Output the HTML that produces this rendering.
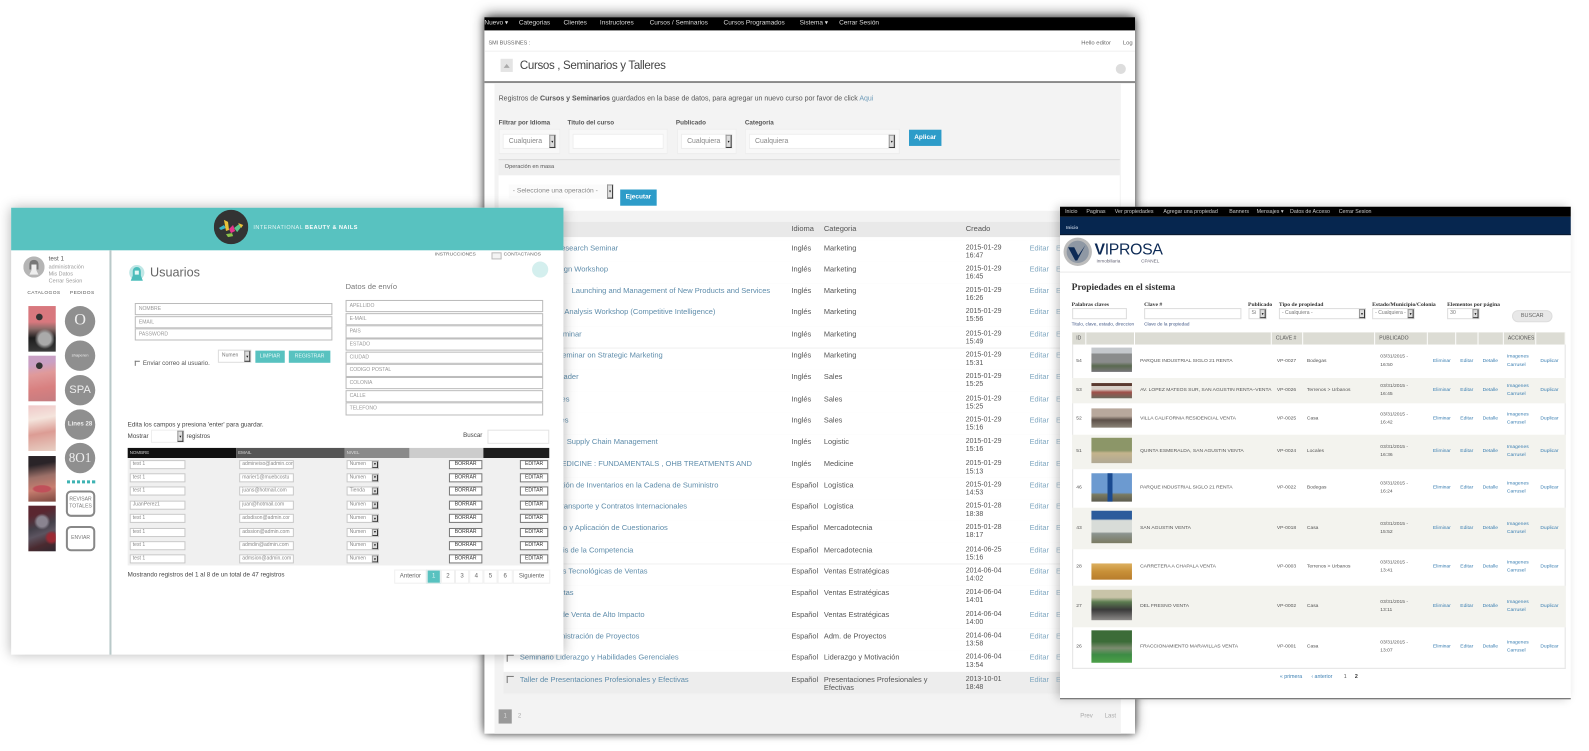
<!DOCTYPE html>
<html lang="es"><head><meta charset="utf-8"><title>Portafolio</title>
<style>
html,body{margin:0;padding:0;width:1589px;height:751px;overflow:hidden;background:#fff}
#root{position:absolute;left:0;top:0;width:1568px;height:741px;transform:scale(1.01339);transform-origin:0 0;filter:blur(.35px);font-family:"Liberation Sans",sans-serif;color:#555}
.a,.a *,.lr *,.rh{box-sizing:border-box}
.a{position:absolute;white-space:nowrap;line-height:8px}
.g{position:absolute;left:0;top:0;width:1568px;height:741px}
.b{font-weight:bold}
/* select arrow */
.ar{position:absolute;right:0;top:0;bottom:0;width:6px;background:#ddd;border:1px solid #999;border-right-color:#333;border-bottom-color:#333}
.ar:after{content:"";position:absolute;left:1px;top:50%;margin-top:-1px;border:1.5px solid transparent;border-top:2.5px solid #111}
/* center */
.n{color:#ddd;font-size:6.4px;top:19px}
.fl{font-size:6.2px;font-weight:bold;color:#555;top:118px}
.fb{background:#f8f8f8;border:1px solid #eee;top:127px;height:25px}
.fi{position:absolute;left:3px;top:4px;bottom:4px;right:3px;background:#fff;border:1px solid #eee;font-size:6.8px;line-height:14px;padding-left:5px;color:#888}
.r{position:absolute;left:497px;width:608px;height:21.3px;background:#fff;border-bottom:1px solid #f0f0f0;color:#555;font-size:7.3px}
.r span{position:absolute;white-space:nowrap;top:3.5px;line-height:8px}
.t{color:#5f8dab;font-size:7.45px}.i{left:284px}.k{left:316px}.d{left:456px;font-size:6.9px}.e{left:519px;color:#7fa7c0}.x{left:545px;color:#a8c2d2}
.cb{position:absolute;left:3px;top:4px;width:6px;height:6px;border-top:1.5px solid #777;border-left:1.5px solid #777}
/* left */
.li{background:#fff;border:1px solid #bbb;border-width:1.5px 1px 1.5px 1px;height:12.4px;font-size:5px;line-height:10px;padding-left:3px;color:#999}
.lc{width:30px;height:30px;border-radius:50%;background:#8f8f8f;color:#eee;text-align:center;line-height:30px;left:64px}
.lr{position:absolute;left:0;width:1568px;height:9px}
.lr i{position:absolute;top:0;height:9px;background:#fff;border:1px solid #c8c8c8;font:normal 5px/7px "Liberation Sans",sans-serif;color:#888;padding-left:2px;white-space:nowrap;overflow:hidden}
.lr b{position:absolute;top:0;height:9px;background:#fff;border:1px solid #777;font:normal 5px/7px "Liberation Sans",sans-serif;color:#333;text-align:center}
.pg{top:562px;height:14px;background:#fff;border:1px solid #f0f0f0;font-size:6px;line-height:13px;text-align:center;color:#666}
.th{left:28px;width:27px;height:45px}
/* right */
.rn{color:#ccc;font-size:5.25px;top:205px}
.rl{font:bold 5.6px/8px "Liberation Serif",serif;color:#333;top:296.5px}
.ri{top:304px;height:11px;background:#fff;border:1px solid #ddd;font-size:5px;line-height:9px;padding-left:2px;color:#777}
.rh{position:absolute;top:327.6px;height:12px;border-right:1px solid #fff;font-size:5px;line-height:12px;color:#555;background:#dcdcd4;padding-left:4px}
.p{position:absolute;left:1058px;width:486.5px;font-size:4.9px;color:#555}
.p span{position:absolute;white-space:nowrap;top:50%;margin-top:-4px;line-height:8px}
.p em{position:absolute;font-style:normal;left:19px;width:40px}
.L{color:#3b7fb2}
.p .T{margin-top:-8px}
</style></head><body>
<div id="root">

<!-- CENTER PANEL -->
<div class="g" style="z-index:1">
<div class="a" style="left:478px;top:17px;width:642px;height:707px;background:#fff;box-shadow:0 -3px 12px rgba(0,0,0,.55),0 1px 7px rgba(0,0,0,.6)"></div>
<div class="a" style="left:478px;top:17px;width:642px;height:13px;background:#000"></div>
<div class="a n" style="left:478px">Nuevo ▾</div><div class="a n" style="left:512px">Categorias</div><div class="a n" style="left:556px">Clientes</div><div class="a n" style="left:592px">Instructores</div><div class="a n" style="left:641px">Cursos / Seminarios</div><div class="a n" style="left:714px">Cursos Programados</div><div class="a n" style="left:789px">Sistema ▾</div><div class="a n" style="left:828px">Cerrar Sesión</div>
<div class="a" style="left:482px;top:39px;font-size:5.4px;color:#666">SMI BUSSINES :</div>
<div class="a" style="left:1067px;top:39px;font-size:5.8px;color:#666">Hello editor</div>
<div class="a" style="left:1108px;top:39px;font-size:5.8px;color:#666">Log</div>
<div class="a" style="left:478px;top:50px;width:642px;height:1px;background:#f0f0f0"></div>
<div class="a" style="left:494px;top:58px;width:12px;height:13px;background:#e4e4e4"></div>
<div class="a" style="left:497px;top:61px;border:3px solid transparent;border-bottom:4px solid #aaa;margin-top:-1px"></div>
<div class="a" style="left:513px;top:57px;font-size:11.4px;line-height:16px;letter-spacing:-.33px;color:#444">Cursos , Seminarios y Talleres</div>
<div class="a" style="left:1101px;top:63px;width:10px;height:10px;border-radius:50%;background:#ddd"></div>
<div class="a" style="left:478px;top:80px;width:642px;height:1.5px;background:#8a8a8a"></div>
<div class="a" style="left:488px;top:81.5px;width:618px;height:642.5px;background:#f3f3f3"></div>
<div class="a" style="left:492px;top:94px;font-size:6.95px;color:#555">Registros de <b>Cursos y Seminarios</b> guardados en la base de datos, para agregar un nuevo curso por favor de click <span style="color:#6f9cba">Aqui</span></div>

<div class="a fl" style="left:492px">Filtrar por Idioma</div><div class="a fl" style="left:560px">Titulo del curso</div><div class="a fl" style="left:667px">Publicado</div><div class="a fl" style="left:735px">Categoria</div>
<div class="a fb" style="left:492px;width:61px"><div class="fi">Cualquiera<div class="ar"></div></div></div>
<div class="a fb" style="left:561px;width:98px"><div class="fi"></div></div>
<div class="a fb" style="left:668px;width:59px"><div class="fi">Cualquiera<div class="ar"></div></div></div>
<div class="a fb" style="left:735px;width:153px"><div class="fi">Cualquiera<div class="ar"></div></div></div>
<div class="a b" style="left:897px;top:128px;width:32px;height:16px;background:#2d9cc9;color:#fff;font-size:6.4px;line-height:15px;text-align:center">Aplicar</div>

<div class="a" style="left:492px;top:157px;width:613px;height:16px;background:#efefef;border-top:1px solid #ddd;font-size:5.6px;line-height:15px;padding-left:6px;color:#555">Operación en masa</div>
<div class="a" style="left:492px;top:173px;width:613px;height:35px;background:#fff"></div>
<div class="a" style="left:502px;top:182px;width:103px;height:14px;background:#fbfbfb;font-size:6.6px;line-height:14px;padding-left:4px;color:#888">- Seleccione una operación -<div class="ar"></div></div>
<div class="a b" style="left:612px;top:187px;width:36px;height:16px;background:#2d9cc9;color:#fff;font-size:6.4px;line-height:16px;text-align:center">Ejecutar</div>

<div class="a" style="left:497px;top:219px;width:608px;height:15px;background:#e9e9e9"></div>
<div class="a" style="left:781px;top:222px;font-size:7.4px">Idioma</div><div class="a" style="left:813px;top:222px;font-size:7.4px">Categoria</div><div class="a" style="left:953px;top:222px;font-size:7.4px">Creado</div>
<div class="a" style="left:497px;top:234px;width:608px;height:3px;background:#fff"></div>

<div class="r" style="top:237px"><span class="t" style="right:495px">Research Seminar</span><span class="i">Inglés</span><span class="k">Marketing</span><span class="d">2015-01-29<br>16:47</span><span class="e">Editar</span><span class="x">Eliminar</span></div>
<div class="r" style="top:258.3px"><span class="t" style="right:505px">Design Workshop</span><span class="i">Inglés</span><span class="k">Marketing</span><span class="d">2015-01-29<br>16:45</span><span class="e">Editar</span><span class="x">Eliminar</span></div>
<div class="r" style="top:279.6px"><span class="t" style="right:345px">Launching and Management of New Products and Services</span><span class="i">Inglés</span><span class="k">Marketing</span><span class="d">2015-01-29<br>16:26</span><span class="e">Editar</span><span class="x">Eliminar</span></div>
<div class="r" style="top:300.9px"><span class="t" style="right:399px">Analysis Workshop (Competitive Intelligence)</span><span class="i">Inglés</span><span class="k">Marketing</span><span class="d">2015-01-29<br>15:56</span><span class="e">Editar</span><span class="x">Eliminar</span></div>
<div class="r" style="top:322.2px"><span class="t" style="right:531px">Seminar</span><span class="i">Inglés</span><span class="k">Marketing</span><span class="d">2015-01-29<br>15:49</span><span class="e">Editar</span><span class="x">Eliminar</span></div>
<div class="r" style="top:343.5px"><span class="t" style="right:451px">Seminar on Strategic Marketing</span><span class="i">Inglés</span><span class="k">Marketing</span><span class="d">2015-01-29<br>15:31</span><span class="e">Editar</span><span class="x">Eliminar</span></div>
<div class="r" style="top:364.8px"><span class="t" style="right:534px">Leader</span><span class="i">Inglés</span><span class="k">Sales</span><span class="d">2015-01-29<br>15:25</span><span class="e">Editar</span><span class="x">Eliminar</span></div>
<div class="r" style="top:386.1px"><span class="t" style="right:543px">Sales</span><span class="i">Inglés</span><span class="k">Sales</span><span class="d">2015-01-29<br>15:25</span><span class="e">Editar</span><span class="x">Eliminar</span></div>
<div class="r" style="top:407.4px"><span class="t" style="right:544px">Sales</span><span class="i">Inglés</span><span class="k">Sales</span><span class="d">2015-01-29<br>15:16</span><span class="e">Editar</span><span class="x">Eliminar</span></div>
<div class="r" style="top:428.7px"><span class="t" style="right:456px">Supply Chain Management</span><span class="i">Inglés</span><span class="k">Logistic</span><span class="d">2015-01-29<br>15:16</span><span class="e">Editar</span><span class="x">Eliminar</span></div>
<div class="r" style="top:450px"><span class="t" style="right:363px">MEDICINE : FUNDAMENTALS , OHB TREATMENTS AND</span><span class="i">Inglés</span><span class="k">Medicine</span><span class="d">2015-01-29<br>15:13</span><span class="e">Editar</span><span class="x">Eliminar</span></div>
<div class="r" style="top:471.3px"><span class="t" style="right:396px">Gestión de Inventarios en la Cadena de Suministro</span><span class="i">Español</span><span class="k">Logística</span><span class="d">2015-01-29<br>14:53</span><span class="e">Editar</span><span class="x">Eliminar</span></div>
<div class="r" style="top:492.6px"><span class="t" style="right:427px">Transporte y Contratos Internacionales</span><span class="i">Español</span><span class="k">Logística</span><span class="d">2015-01-28<br>18:38</span><span class="e">Editar</span><span class="x">Eliminar</span></div>
<div class="r" style="top:513.9px"><span class="t" style="right:446px">Diseño y Aplicación de Cuestionarios</span><span class="i">Español</span><span class="k">Mercadotecnia</span><span class="d">2015-01-28<br>18:17</span><span class="e">Editar</span><span class="x">Eliminar</span></div>
<div class="r" style="top:535.2px"><span class="t" style="right:480px">Análisis de la Competencia</span><span class="i">Español</span><span class="k">Mercadotecnia</span><span class="d">2014-06-25<br>15:16</span><span class="e">Editar</span><span class="x">Eliminar</span></div>
<div class="r" style="top:556.5px"><span class="t" style="right:466px">Herramientas Tecnológicas de Ventas</span><span class="i">Español</span><span class="k">Ventas Estratégicas</span><span class="d">2014-06-04<br>14:02</span><span class="e">Editar</span><span class="x">Eliminar</span></div>
<div class="r" style="top:577.8px"><span class="t" style="right:539px">Ventas</span><span class="i">Español</span><span class="k">Ventas Estratégicas</span><span class="d">2014-06-04<br>14:01</span><span class="e">Editar</span><span class="x">Eliminar</span></div>
<div class="r" style="top:599.1px"><span class="t" style="right:469px">Técnicas de Venta de Alto Impacto</span><span class="i">Español</span><span class="k">Ventas Estratégicas</span><span class="d">2014-06-04<br>14:00</span><span class="e">Editar</span><span class="x">Eliminar</span></div>
<div class="r" style="top:620.4px"><span class="t" style="right:474px">Administración de Proyectos</span><span class="i">Español</span><span class="k">Adm. de Proyectos</span><span class="d">2014-06-04<br>13:58</span><span class="e">Editar</span><span class="x">Eliminar</span></div>
<div class="r" style="top:641.7px"><div class="cb"></div><span class="t" style="left:16px">Seminario Liderazgo y Habilidades Gerenciales</span><span class="i">Español</span><span class="k">Liderazgo y Motivación</span><span class="d">2014-06-04<br>13:54</span><span class="e">Editar</span><span class="x">Eliminar</span></div>
<div class="r" style="top:663px;background:#ededed"><div class="cb"></div><span class="t" style="left:16px">Taller de Presentaciones Profesionales y Efectivas</span><span class="i">Español</span><span class="k">Presentaciones Profesionales y<br>Efectivas</span><span class="d">2013-10-01<br>18:48</span><span class="e">Editar</span><span class="x">Eliminar</span></div>

<div class="a" style="left:492px;top:700px;width:13px;height:14px;background:#999;color:#ddd;font-size:6px;line-height:14px;text-align:center">1</div>
<div class="a" style="left:511px;top:703px;font-size:6px;color:#aaa">2</div>
<div class="a" style="left:1066px;top:703px;font-size:6px;color:#aaa">Prev</div>
<div class="a" style="left:1090px;top:703px;font-size:6px;color:#aaa">Last</div>
</div>

<!-- LEFT PANEL -->
<div class="g" style="z-index:3">
<div class="a" style="left:11px;top:205px;width:545px;height:441px;background:#fff;box-shadow:0 0 12px rgba(0,0,0,.3)"></div>
<div class="a" style="left:11px;top:205px;width:545px;height:42px;background:#58c2c0"></div>
<svg class="a" style="left:211px;top:207px" width="34" height="34" viewBox="0 0 34 34"><circle cx="17" cy="17" r="17" fill="#333"/><path d="M5 18l5-3 2 3-5 2z" fill="#3ab5c6"/><path d="M10 10l4 2 1 8-3 1z" fill="#e8c13a"/><path d="M15 19l4-4 2 6-4 2z" fill="#e2358a"/><path d="M20 18l5-4 2 3-4 5z" fill="#59c58b"/><path d="M24 13l5 2-2 3z" fill="#e8c13a"/><path d="M12 24l6-1 1 3-5 1z" fill="#8bc34a"/></svg>
<div class="a" style="left:250px;top:221px;font-size:5.4px;letter-spacing:.5px;color:#e4f5f4">INTERNATIONAL <b style="color:#fff">BEAUTY &amp; NAILS</b></div>
<div class="a" style="left:108px;top:247px;width:2px;height:399px;background:#b9c9c9"></div>

<svg class="a" style="left:23px;top:253px" width="21" height="21" viewBox="0 0 21 21"><circle cx="10.5" cy="10.5" r="10.5" fill="#b5b5b5"/><path d="M6 8c0-6 9-6 9 0v5H6z" fill="#777"/><path d="M8 8h5v6l2 4H6l2-4z" fill="#eee"/></svg>
<div class="a" style="left:48px;top:252px;font-size:6.2px;color:#555">test 1</div>
<div class="a" style="left:48px;top:260px;font-size:5.4px;color:#999">administración</div>
<div class="a" style="left:48px;top:267px;font-size:5.4px;color:#999">Mis Datos</div>
<div class="a" style="left:48px;top:274px;font-size:5.4px;color:#999">Cerrar Sesion</div>
<div class="a" style="left:27px;top:286px;font-size:4.8px;letter-spacing:.4px;color:#555">CATALOGOS</div>
<div class="a" style="left:69px;top:286px;font-size:4.8px;letter-spacing:.4px;color:#555">PEDIDOS</div>

<div class="a th" style="top:302px;background:radial-gradient(circle at 40% 24%,#333 0 3px,transparent 3.5px),radial-gradient(circle at 60% 72%,#aaa 0 6px,transparent 10px),linear-gradient(180deg,#d8787e 0 35%,#8a6a68 50%,#1d1d1d 70%,#3a3a3a)"></div>
<div class="a th" style="top:351px;background:radial-gradient(circle at 40% 22%,#333 0 3px,transparent 3.5px),linear-gradient(170deg,#c9a0c4 0 20%,#e09a9a 40%,#d88080 70%,#c47c80)"></div>
<div class="a th" style="top:400px;background:linear-gradient(170deg,#f0c8c8,#f4e4dc 30%,#dc9c94 60%,#e8d0c4)"></div>
<div class="a th" style="top:450px;background:radial-gradient(ellipse 10px 4px at 50% 72%,#c0505a 0 80%,transparent),linear-gradient(170deg,#2a2428 0 20%,#9c7068 45%,#c87e70 70%,#7c4840)"></div>
<div class="a th" style="top:499px;background:radial-gradient(circle at 50% 35%,#8a8490 0 5px,transparent 8px),radial-gradient(circle at 85% 70%,#9a2a34 0 4px,transparent 7px),linear-gradient(160deg,#5a2630 0 20%,#44404a 45%,#5c5460 60%,#4a2a30 80%,#302830)"></div>

<div class="a lc" style="top:302px;font:16px/28px 'Liberation Serif',serif">O</div>
<div class="a lc" style="top:336px;font-size:4px">shaperen</div>
<div class="a lc" style="top:370px;font-size:11px">SPA</div>
<div class="a lc" style="top:403.5px;font-size:6px;font-weight:bold">Lines 28</div>
<div class="a lc" style="top:437px;font:13px/30px 'Liberation Serif',serif">8O1</div>
<div class="a" style="left:66px;top:473.5px;width:28px;height:3px;background:repeating-linear-gradient(90deg,#3fb3b3 0 3px,#fff 3px 5px)"></div>
<div class="a" style="left:65px;top:484px;width:29px;height:26px;border:2px solid #888;border-radius:5px;font-size:5px;line-height:7px;text-align:center;padding-top:4px;color:#777">REVISAR<br>TOTALES</div>
<div class="a" style="left:65px;top:519px;width:29px;height:25px;border:2px solid #888;border-radius:5px;font-size:5px;line-height:21px;text-align:center;color:#777">ENVIAR</div>

<svg class="a" style="left:127px;top:261px" width="16" height="17" viewBox="0 0 16 17"><circle cx="8" cy="8" r="7.5" fill="#bfe7e6"/><path d="M4 7c0-6 8-6 8 0v4l2 5H2l2-5z" fill="#4dbdbb"/><path d="M6 6h4v4H6z" fill="#e6f7f6"/></svg>
<div class="a" style="left:148px;top:262px;font-size:12.5px;line-height:14px;color:#666">Usuarios</div>
<div class="a" style="left:429px;top:248px;font-size:4.9px;color:#666">INSTRUCCIONES</div>
<div class="a" style="left:485px;top:249px;width:10px;height:7px;border:1px solid #bbb;background:#f4f4f4"></div>
<div class="a" style="left:497px;top:248px;font-size:4.9px;color:#666">CONTACTANOS</div>
<div class="a" style="left:525px;top:258px;width:16px;height:16px;border-radius:50%;background:#d4efee"></div>
<div class="a" style="left:341px;top:279px;font-size:7.4px;letter-spacing:.08px;color:#777">Datos de envío</div>

<div class="a li" style="left:133px;top:299px;width:195px">NOMBRE</div>
<div class="a li" style="left:133px;top:311.5px;width:195px">EMAIL</div>
<div class="a li" style="left:133px;top:324px;width:195px">PASSWORD</div>
<div class="a" style="left:133px;top:356px;width:5px;height:5px;border-top:1.5px solid #777;border-left:1.5px solid #777"></div>
<div class="a" style="left:141px;top:355px;font-size:6.1px;color:#555">Enviar correo al usuario.</div>
<div class="a" style="left:215px;top:345px;width:33px;height:13px;border:1px solid #ddd;font-size:5px;line-height:11px;padding-left:3px;color:#777">Numen<div class="ar"></div></div>
<div class="a" style="left:252px;top:346px;width:29px;height:12px;background:#58c2c0;color:#e8f8f8;font-size:5px;line-height:12px;text-align:center">LIMPIAR</div>
<div class="a" style="left:285px;top:346px;width:41px;height:12px;background:#58c2c0;color:#e8f8f8;font-size:5px;line-height:12px;text-align:center">REGISTRAR</div>

<div class="a li" style="left:341px;top:296px;width:195px">APELLIDO</div>
<div class="a li" style="left:341px;top:308.7px;width:195px">E-MAIL</div>
<div class="a li" style="left:341px;top:321.3px;width:195px">PAIS</div>
<div class="a li" style="left:341px;top:334px;width:195px">ESTADO</div>
<div class="a li" style="left:341px;top:346.6px;width:195px">CIUDAD</div>
<div class="a li" style="left:341px;top:359.3px;width:195px">CODIGO POSTAL</div>
<div class="a li" style="left:341px;top:372px;width:195px">COLONIA</div>
<div class="a li" style="left:341px;top:384.6px;width:195px">CALLE</div>
<div class="a li" style="left:341px;top:397.2px;width:195px">TELEFONO</div>

<div class="a" style="left:126px;top:416px;font-size:6.2px;color:#444">Edita los campos y presiona 'enter' para guardar.</div>
<div class="a" style="left:126px;top:427px;font-size:6.1px;color:#444">Mostrar</div>
<div class="a" style="left:149px;top:424px;width:33px;height:13px;background:#fff;border:1px solid #eee"><div class="ar"></div></div>
<div class="a" style="left:184px;top:427px;font-size:6.1px;color:#444">registros</div>
<div class="a" style="left:457px;top:426px;font-size:6.1px;color:#444">Buscar</div>
<div class="a" style="left:481px;top:424px;width:61px;height:14px;background:#fff;border:1px solid #e4e4e4"></div>

<div class="a" style="left:126px;top:442px;width:107px;height:9.5px;background:#111;color:#ccc;font-size:4.4px;line-height:9.5px;padding-left:2px">NOMBRE</div>
<div class="a" style="left:233px;top:442px;width:107px;height:9.5px;background:#555;color:#ddd;font-size:4.4px;line-height:9.5px;padding-left:2px">EMAIL</div>
<div class="a" style="left:340px;top:442px;width:64px;height:9.5px;background:#8a8a8a;color:#ddd;font-size:4.4px;line-height:9.5px;padding-left:2px">NIVEL</div>
<div class="a" style="left:404px;top:442px;width:73px;height:9.5px;background:#ccc"></div>
<div class="a" style="left:477px;top:442px;width:65px;height:9.5px;background:#1e1e1e"></div>
<div class="a" style="left:126px;top:451.5px;width:416px;height:106px;background:#f0f0f0"></div>

<div class="lr" style="top:453.5px"><i style="left:128px;width:55px">test 1</i><i style="left:236px;width:54px">admineiso@admin.com</i><i style="left:342px;width:32px">Numen<span class="ar"></span></i><b style="left:443px;width:33px">BORRAR</b><b style="left:513px;width:28px">EDITAR</b></div>
<div class="lr" style="top:466.9px"><i style="left:128px;width:55px">test 1</i><i style="left:236px;width:54px">marier1@muebcostu</i><i style="left:342px;width:32px">Numen<span class="ar"></span></i><b style="left:443px;width:33px">BORRAR</b><b style="left:513px;width:28px">EDITAR</b></div>
<div class="lr" style="top:480.3px"><i style="left:128px;width:55px">test 1</i><i style="left:236px;width:54px">juans@hotmail.com</i><i style="left:342px;width:32px">Tienda<span class="ar"></span></i><b style="left:443px;width:33px">BORRAR</b><b style="left:513px;width:28px">EDITAR</b></div>
<div class="lr" style="top:493.7px"><i style="left:128px;width:55px">JuanPerez1</i><i style="left:236px;width:54px">juan@hotmail.com</i><i style="left:342px;width:32px">Numen<span class="ar"></span></i><b style="left:443px;width:33px">BORRAR</b><b style="left:513px;width:28px">EDITAR</b></div>
<div class="lr" style="top:507.1px"><i style="left:128px;width:55px">test 1</i><i style="left:236px;width:54px">adsdison@admin.cor</i><i style="left:342px;width:32px">Numen<span class="ar"></span></i><b style="left:443px;width:33px">BORRAR</b><b style="left:513px;width:28px">EDITAR</b></div>
<div class="lr" style="top:520.5px"><i style="left:128px;width:55px">test 1</i><i style="left:236px;width:54px">adssion@admin.com</i><i style="left:342px;width:32px">Numen<span class="ar"></span></i><b style="left:443px;width:33px">BORRAR</b><b style="left:513px;width:28px">EDITAR</b></div>
<div class="lr" style="top:533.9px"><i style="left:128px;width:55px">test 1</i><i style="left:236px;width:54px">admdin@admin.com</i><i style="left:342px;width:32px">Numen<span class="ar"></span></i><b style="left:443px;width:33px">BORRAR</b><b style="left:513px;width:28px">EDITAR</b></div>
<div class="lr" style="top:547.3px"><i style="left:128px;width:55px">test 1</i><i style="left:236px;width:54px">admsion@admin.com</i><i style="left:342px;width:32px">Numen<span class="ar"></span></i><b style="left:443px;width:33px">BORRAR</b><b style="left:513px;width:28px">EDITAR</b></div>

<div class="a" style="left:126px;top:564px;font-size:6.2px;color:#444">Mostrando registros del 1 al 8 de un total de 47 registros</div>
<div class="a pg" style="left:389px;width:32px">Anterior</div>
<div class="a pg" style="left:421px;width:14px;background:#58c2c0;color:#e8f8f8">1</div>
<div class="a pg" style="left:435px;width:14px">2</div><div class="a pg" style="left:449px;width:14px">3</div><div class="a pg" style="left:463px;width:14px">4</div><div class="a pg" style="left:477px;width:14px">5</div><div class="a pg" style="left:491px;width:15px">6</div>
<div class="a pg" style="left:506px;width:37px">Siguiente</div>
</div>

<!-- RIGHT PANEL -->
<div class="g" style="z-index:3">
<div class="a" style="left:1046px;top:204px;width:504px;height:486px;background:#fff;border-bottom:1.5px solid #555;box-shadow:-3px 0 9px rgba(0,0,0,.22)"></div>
<div class="a" style="left:1046px;top:204px;width:504px;height:9.5px;background:#000"></div>
<div class="a" style="left:1046px;top:213.5px;width:504px;height:18px;background:#06264f;border-bottom:1px solid #0a1a30"></div>
<div class="a rn" style="left:1051px">Inicio</div><div class="a rn" style="left:1072px">Paginas</div><div class="a rn" style="left:1100px">Ver propiedades</div><div class="a rn" style="left:1148px">Agregar una propiedad</div><div class="a rn" style="left:1213px">Banners</div><div class="a rn" style="left:1240px">Mensajes ▾</div><div class="a rn" style="left:1273px">Datos de Acceso</div><div class="a rn" style="left:1321px">Cerrar Sesion</div>
<div class="a b" style="left:1052px;top:221px;font-size:4.6px;color:#b8c6d8">Inicio</div>

<svg class="a" style="left:1049px;top:234px" width="29" height="29" viewBox="0 0 29 29"><circle cx="14.5" cy="14.5" r="14" fill="#bcbcbc"/><circle cx="14.5" cy="14.5" r="11" fill="#8f98a4"/><path d="M5 10h6l4 8 7-10-8 15h-2z" fill="#0d2a55"/></svg>
<div class="a" style="left:1080px;top:237px;font-size:15.6px;line-height:19px;color:#0d2a55;letter-spacing:-.3px"><b>V</b><span style="color:#0d2a55">IPROSA</span></div>
<div class="a" style="left:1082px;top:254px;font-size:4.6px;color:#667">Inmobiliaria</div>
<div class="a" style="left:1126px;top:254px;font-size:4.6px;color:#667">CPANEL</div>
<div class="a" style="left:1046px;top:267.5px;width:504px;height:1px;background:#eaeaea"></div>
<div class="a" style="left:1057.5px;top:279px;font:bold 9.4px/11px 'Liberation Serif',serif;color:#333">Propiedades en el sistema</div>

<div class="a rl" style="left:1057.5px">Palabras claves</div><div class="a rl" style="left:1129px">Clave #</div><div class="a rl" style="left:1231.5px">Publicado</div><div class="a rl" style="left:1262px">Tipo de propiedad</div><div class="a rl" style="left:1354px">Estado/Municipio/Colonia</div><div class="a rl" style="left:1428px">Elementos por página</div>
<div class="a ri" style="left:1057.5px;width:54.5px"></div>
<div class="a ri" style="left:1129px;width:96px"></div>
<div class="a ri" style="left:1232px;width:18px">Si<div class="ar"></div></div>
<div class="a ri" style="left:1262px;width:86px">- Cualquiera -<div class="ar"></div></div>
<div class="a ri" style="left:1354px;width:42px">- Cualquiera -<div class="ar"></div></div>
<div class="a ri" style="left:1428px;width:32px">30<div class="ar"></div></div>
<div class="a" style="left:1492px;top:306px;width:40px;height:12px;border-radius:6px;background:#e8e8e8;border:1px solid #ddd;font-size:5.4px;line-height:10px;text-align:center;color:#666">BUSCAR</div>
<div class="a" style="left:1057.5px;top:316px;font-size:4.6px;color:#445a88">Titulo, clave, estado, direccion</div>
<div class="a" style="left:1129px;top:316px;font-size:4.6px;color:#445a88">Clave de la propiedad</div>

<div class="rh" style="left:1058px;width:14px">ID</div><div class="rh" style="left:1072px;width:48px"></div><div class="rh" style="left:1120px;width:135px"></div><div class="rh" style="left:1255px;width:31px">CLAVE #</div><div class="rh" style="left:1286px;width:71px"></div><div class="rh" style="left:1357px;width:52px">PUBLICADO</div><div class="rh" style="left:1409px;width:28px"></div><div class="rh" style="left:1437px;width:22px"></div><div class="rh" style="left:1459px;width:25px"></div><div class="rh" style="left:1484px;width:32px">ACCIONES</div><div class="rh" style="left:1516px;width:28.5px"></div>

<div class="a" style="left:1058px;top:340px;width:486.5px;height:320px;border:1px solid #e4e4e4;border-top:0"></div>

<div class="p" style="top:340px;height:33px"><span style="left:4px">54</span><em style="top:3px;height:24px;background:linear-gradient(180deg,#c4c8cc 0 25%,#8a8c8c 25% 60%,#5a6a50 75%,#77757a)"></em><span style="left:67px">PARQUE INDUSTRIAL SIGLO 21 RENTA</span><span style="left:202px">VP-0027</span><span style="left:231.6px">Bodegas</span><span class="T" style="left:304px">03/31/2015 -<br>16:50</span><span class="L" style="left:356px">Eliminar</span><span class="L" style="left:383px">Editar</span><span class="L" style="left:405px">Detalle</span><span class="L T" style="left:429px">Imagenes<br>Carrusel</span><span class="L" style="left:462px">Duplicar</span></div>
<div class="p" style="top:373px;height:25px;background:#f3f3ee"><span style="left:4px">53</span><em style="top:4.5px;height:15px;background:linear-gradient(180deg,#5a3a30 0 20%,#d8d0c8 20% 40%,#a0504a 60%,#6a6a5c)"></em><span style="left:67px">AV. LOPEZ MATEOS SUR, SAN AGUSTIN RENTA–VENTA</span><span style="left:202px">VP-0026</span><span style="left:231.6px">Terrenos &gt; Urbanos</span><span class="T" style="left:304px">03/31/2015 -<br>16:45</span><span class="L" style="left:356px">Eliminar</span><span class="L" style="left:383px">Editar</span><span class="L" style="left:405px">Detalle</span><span class="L T" style="left:429px">Imagenes<br>Carrusel</span><span class="L" style="left:462px">Duplicar</span></div>
<div class="p" style="top:398px;height:31px"><span style="left:4px">52</span><em style="top:5px;height:18.5px;background:linear-gradient(180deg,#b8a89c 0 40%,#5c5048 60%,#8c8478)"></em><span style="left:67px">VILLA CALIFORNIA RESIDENCIAL VENTA</span><span style="left:202px">VP-0025</span><span style="left:231.6px">Casa</span><span class="T" style="left:304px">03/31/2015 -<br>16:42</span><span class="L" style="left:356px">Eliminar</span><span class="L" style="left:383px">Editar</span><span class="L" style="left:405px">Detalle</span><span class="L T" style="left:429px">Imagenes<br>Carrusel</span><span class="L" style="left:462px">Duplicar</span></div>
<div class="p" style="top:429px;height:34px;background:#f3f3ee"><span style="left:4px">51</span><em style="top:3px;height:25px;background:linear-gradient(180deg,#8c9668 0 50%,#c4b48c 60%,#b0a894)"></em><span style="left:67px">QUINTA ESMERALDA, SAN AGUSTIN VENTA</span><span style="left:202px">VP-0024</span><span style="left:231.6px">Locales</span><span class="T" style="left:304px">03/31/2015 -<br>16:36</span><span class="L" style="left:356px">Eliminar</span><span class="L" style="left:383px">Editar</span><span class="L" style="left:405px">Detalle</span><span class="L T" style="left:429px">Imagenes<br>Carrusel</span><span class="L" style="left:462px">Duplicar</span></div>
<div class="p" style="top:463px;height:38px"><span style="left:4px">46</span><em style="top:3.5px;height:28px;background:linear-gradient(90deg,transparent 0 40%,#1a4a90 40% 52%,transparent 52%),linear-gradient(180deg,#6c9ad0 0 68%,#7a7a60 75%,#5c5c50)"></em><span style="left:67px">PARQUE INDUSTRIAL SIGLO 21 RENTA</span><span style="left:202px">VP-0022</span><span style="left:231.6px">Bodegas</span><span class="T" style="left:304px">03/31/2015 -<br>16:24</span><span class="L" style="left:356px">Eliminar</span><span class="L" style="left:383px">Editar</span><span class="L" style="left:405px">Detalle</span><span class="L T" style="left:429px">Imagenes<br>Carrusel</span><span class="L" style="left:462px">Duplicar</span></div>
<div class="p" style="top:501px;height:41px;background:#f3f3ee"><span style="left:4px">43</span><em style="top:3px;height:31.5px;background:linear-gradient(180deg,#2c5c9c 0 25%,#d8dcd8 30% 65%,#8c9490 70%,#7a7a62)"></em><span style="left:67px">SAN AGUSTIN VENTA</span><span style="left:202px">VP-0018</span><span style="left:231.6px">Casa</span><span class="T" style="left:304px">03/31/2015 -<br>15:52</span><span class="L" style="left:356px">Eliminar</span><span class="L" style="left:383px">Editar</span><span class="L" style="left:405px">Detalle</span><span class="L T" style="left:429px">Imagenes<br>Carrusel</span><span class="L" style="left:462px">Duplicar</span></div>
<div class="p" style="top:542px;height:36px"><span style="left:4px">28</span><em style="top:14px;height:16px;background:linear-gradient(180deg,#dcb060,#c89038 50%,#b87c2c)"></em><span style="left:67px">CARRETERA A CHAPALA VENTA</span><span style="left:202px">VP-0003</span><span style="left:231.6px">Terrenos &gt; Urbanos</span><span class="T" style="left:304px">03/31/2015 -<br>13:41</span><span class="L" style="left:356px">Eliminar</span><span class="L" style="left:383px">Editar</span><span class="L" style="left:405px">Detalle</span><span class="L T" style="left:429px">Imagenes<br>Carrusel</span><span class="L" style="left:462px">Duplicar</span></div>
<div class="p" style="top:578px;height:41px;background:#f3f3ee"><span style="left:4px">27</span><em style="top:4px;height:30px;background:linear-gradient(180deg,#c8c4a8 0 25%,#5c7c50 40%,#3a3a3a 65%,#8c8a88)"></em><span style="left:67px">DEL FRESNO VENTA</span><span style="left:202px">VP-0002</span><span style="left:231.6px">Casa</span><span class="T" style="left:304px">03/31/2015 -<br>13:11</span><span class="L" style="left:356px">Eliminar</span><span class="L" style="left:383px">Editar</span><span class="L" style="left:405px">Detalle</span><span class="L T" style="left:429px">Imagenes<br>Carrusel</span><span class="L" style="left:462px">Duplicar</span></div>
<div class="p" style="top:619px;height:40px"><span style="left:4px">26</span><em style="top:3px;height:32px;background:linear-gradient(180deg,#3c6c38 0 35%,#7c8c70 55%,#3c8c44 75%,#4ca048)"></em><span style="left:67px">FRACCIONAMIENTO MARAVILLAS VENTA</span><span style="left:202px">VP-0001</span><span style="left:231.6px">Casa</span><span class="T" style="left:304px">03/31/2015 -<br>13:07</span><span class="L" style="left:356px">Eliminar</span><span class="L" style="left:383px">Editar</span><span class="L" style="left:405px">Detalle</span><span class="L T" style="left:429px">Imagenes<br>Carrusel</span><span class="L" style="left:462px">Duplicar</span></div>

<div class="a L" style="left:1263px;top:664px;font-size:5.2px">« primera</div>
<div class="a L" style="left:1294px;top:664px;font-size:5.2px">‹ anterior</div>
<div class="a" style="left:1326px;top:664px;font-size:5.2px">1</div>
<div class="a b" style="left:1337px;top:664px;font-size:5.2px;color:#333">2</div>
</div>
</div>
</body></html>
